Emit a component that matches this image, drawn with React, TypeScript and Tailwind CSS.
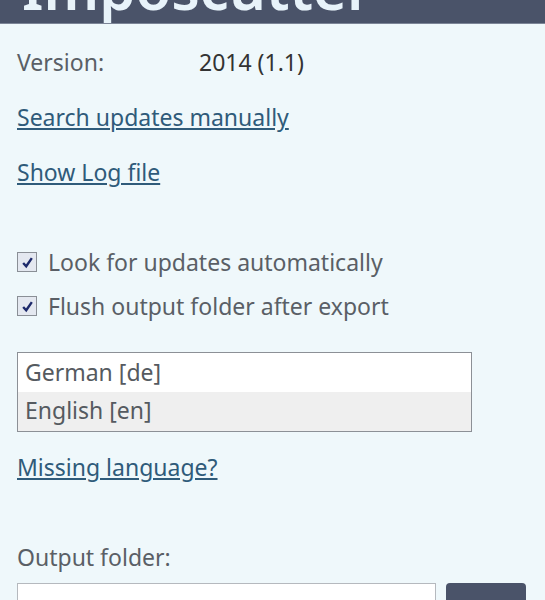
const font = { fontFamily: '"Noto Sans", "Open Sans", sans-serif' };

function Check({ label }: { label: string }) {
  return (
    <label className="flex items-center gap-[11px] text-[23px] leading-[28px] text-[#5a5f66]">
      <span className="flex h-[20px] w-[20px] items-center justify-center border border-[#8a8f96] bg-[#e4e8f0]">
        <svg viewBox="0 0 12 12" className="h-[13px] w-[13px]">
          <path d="M2 6.5 L4.8 9.5 L10 2" fill="none" stroke="#1d2a6b" strokeWidth="2.2" />
        </svg>
      </span>
      {label}
    </label>
  );
}

export default function App() {
  return (
    <div className="h-[600px] w-[545px] overflow-hidden bg-[#eff8fb]" style={font}>
      <div className="relative h-[24px] overflow-hidden border-b border-[#7c8597] bg-[#4a5369]">
        <span className="absolute left-[22px] top-[-44px] text-[58px] font-semibold leading-[64px] text-[#e8f3fa]">
          Imposcutter
        </span>
      </div>
      <div className="px-[17px] text-[23px] leading-[28px]">
        <div className="mt-[24px] flex text-[#5a5f66]">
          <span className="w-[182px]">Version:</span>
          <span className="text-[#333]">2014 (1.1)</span>
        </div>
        <a className="mt-[27px] block w-fit text-[#2f5b7a] underline underline-offset-2">Search updates manually</a>
        <a className="mt-[27px] block w-fit text-[#2f5b7a] underline underline-offset-2">Show Log file</a>
        <div className="mt-[62px] flex flex-col gap-[16px]">
          <Check label="Look for updates automatically" />
          <Check label="Flush output folder after export" />
        </div>
        <div className="mt-[32px] w-[455px] border border-[#8c9096] bg-white text-[#555a60]">
          <div className="h-[39px] px-[7px] leading-[39px]">German [de]</div>
          <div className="h-[39px] bg-[#efefef] px-[7px] leading-[37px]">English [en]</div>
        </div>
        <a className="mt-[21px] block w-fit text-[#2f5b7a] underline underline-offset-2">Missing language?</a>
        <div className="mt-[62px] text-[#5a5f66]">Output folder:</div>
        <div className="mt-[12px] flex gap-[10px]">
          <div className="h-[40px] w-[419px] border border-[#b5b9be] bg-white" />
          <div className="h-[40px] w-[80px] rounded-t-[4px] bg-[#4a5369]" />
        </div>
      </div>
    </div>
  );
}
